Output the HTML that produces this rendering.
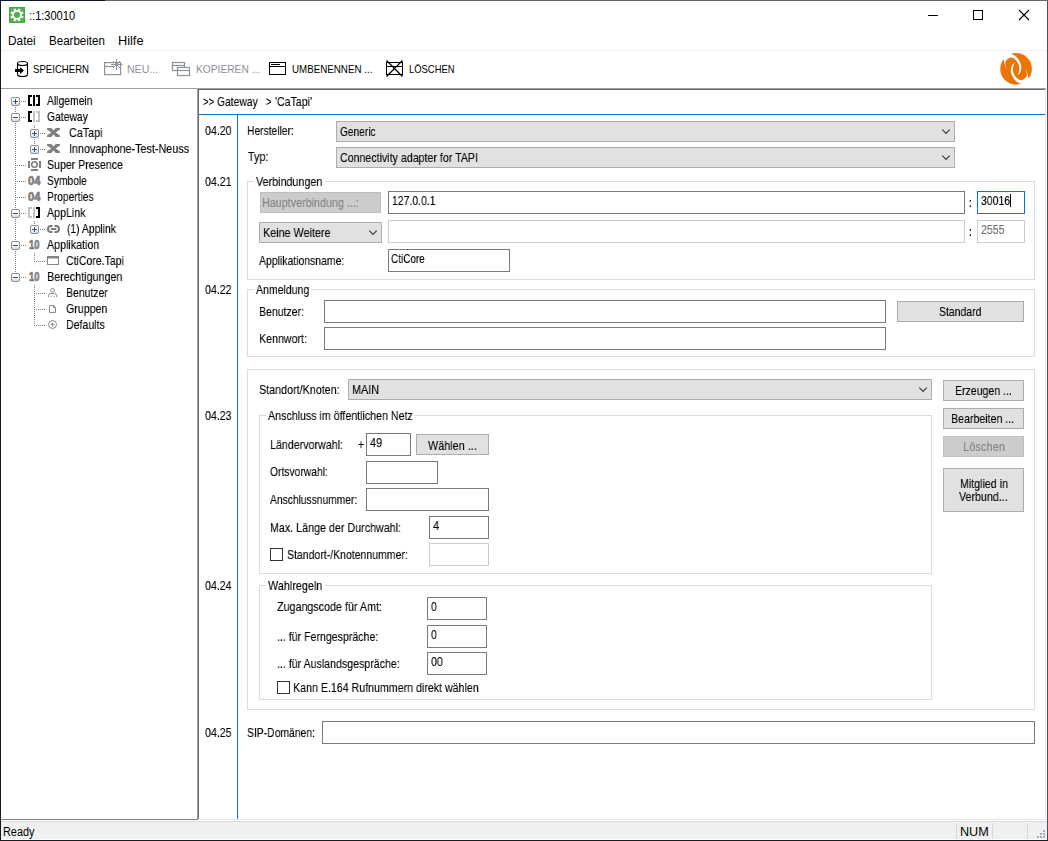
<!DOCTYPE html>
<html lang="de"><head><meta charset="utf-8"><title>::1:30010</title><style>
html,body{margin:0;padding:0;}
body{width:1048px;height:841px;overflow:hidden;background:#fff;position:relative;font-family:"Liberation Sans",sans-serif;color:#000;}
body>div,body>svg,body>span{position:absolute;box-sizing:border-box;}
.t{white-space:pre;transform-origin:0 0;display:block;}
.m{-webkit-text-stroke:0.12px currentColor;will-change:transform;}
svg{overflow:visible;}
</style></head>
<body>
<div style="left:0px;top:0px;width:1048px;height:841px;background:#fff;"></div>
<div style="left:0px;top:821px;width:1048px;height:1px;background:#d9d9d9;"></div>
<div style="left:0px;top:822px;width:1048px;height:17px;background:#f0f0f0;"></div>
<div style="left:1px;top:50px;width:1046px;height:1px;background:#f0f0f0;"></div>
<div style="left:1px;top:88px;width:1045px;height:1px;background:#a0a0a0;"></div>
<div style="left:1px;top:819px;width:197px;height:1px;background:#828282;"></div>
<div style="left:197px;top:88px;width:1px;height:731px;background:#a0a0a0;"></div>
<div style="left:198px;top:89px;width:1px;height:730px;background:#696969;"></div>
<div style="left:198px;top:89px;width:847px;height:1px;background:#696969;"></div>
<div style="left:1045px;top:89px;width:1px;height:731px;background:#e3e3e3;"></div>
<div style="left:199px;top:819px;width:847px;height:1px;background:#e3e3e3;"></div>
<div style="left:0px;top:0px;width:1px;height:841px;background:#0f1a26;"></div>
<div style="left:1047px;top:0px;width:1px;height:841px;background:#4a4f55;"></div>
<div style="left:0px;top:840px;width:1048px;height:1px;background:#1a1e24;"></div>
<div style="left:105px;top:0px;width:943px;height:1px;background:#666;"></div>
<div style="left:0px;top:0px;width:105px;height:1px;background:#0f1a26;"></div>
<svg style="left:9px;top:7px" width="16" height="16" viewBox="0 0 16 16"><rect width="16" height="16" fill="#3fab3c"/><rect x="0.7" y="0.7" width="14.6" height="14.6" fill="#4db04d"/><g fill="#fff"><circle cx="8" cy="7.9" r="4.7"/><rect x="6.7" y="1.4" width="2.6" height="13" transform="rotate(22.5 8 7.9)"/><rect x="6.7" y="1.4" width="2.6" height="13" transform="rotate(67.5 8 7.9)"/><rect x="6.7" y="1.4" width="2.6" height="13" transform="rotate(112.5 8 7.9)"/><rect x="6.7" y="1.4" width="2.6" height="13" transform="rotate(157.5 8 7.9)"/></g><circle cx="8" cy="7.9" r="3.05" fill="#4db04d"/></svg>
<div style="left:928px;top:15px;width:10px;height:1px;background:#000;"></div>
<div style="left:973px;top:10px;width:10px;height:10px;border:1px solid #000;"></div>
<svg style="left:1019px;top:10px" width="10" height="10" viewBox="0 0 10 10"><path d="M0 0L10 10M10 0L0 10" stroke="#000" stroke-width="1.1" fill="none"/></svg>
<svg style="left:14px;top:60px" width="16" height="18" viewBox="0 0 16 18"><g fill="none" stroke="#000" stroke-width="1.15"><ellipse cx="8.5" cy="3.5" rx="5" ry="2"/><path d="M3.5 3.5V14.5M13.5 3.5V14.5"/><path d="M3.5 14.5A5 2 0 0 0 13.5 14.5"/></g><path d="M1 9H6V7L10 10.5L6 14V12H1z" fill="#000"/></svg>
<svg style="left:104px;top:58px" width="19" height="17" viewBox="0 0 19 17"><g fill="none" stroke="#8e9398" stroke-width="1.2"><rect x="0.6" y="4.6" width="16" height="12"/><path d="M0.6 8.5H10"/><path d="M12.5 1V12M7 6.5H18.5M9 3L16 10M16 3L9 10" stroke-width="1"/></g></svg>
<svg style="left:172px;top:62px" width="18" height="14" viewBox="0 0 18 14"><g fill="#fff" stroke="#8e9398" stroke-width="1.2"><rect x="0.5" y="0.5" width="12" height="8"/><path d="M0.5 3.5H12.5"/><rect x="5.5" y="5.5" width="12" height="8"/><path d="M5.5 8.5H17.5"/></g></svg>
<svg style="left:269px;top:62px" width="17" height="13" viewBox="0 0 17 13"><rect x="0.5" y="0.5" width="16" height="12" fill="#fff" stroke="#000" stroke-width="1"/><path d="M0 4.5H17M2 2.5H11" stroke="#000" stroke-width="1"/></svg>
<svg style="left:385px;top:60px" width="19" height="17" viewBox="0 0 19 17"><g fill="none" stroke="#000"><rect x="1.5" y="2.5" width="16" height="12" stroke-width="1"/><path d="M1 6.5H18" stroke-width="1"/><path d="M1.5 0.5L17.5 16.5M17.5 0.5L1.5 16.5" stroke-width="1.25"/></g></svg>
<svg style="left:1000px;top:53px" width="32" height="32" viewBox="0 0 32 32"><g transform="translate(16.07 15.9)"><circle r="15.8" fill="#ec7405"/><path d="M-8.90 0.50L-10.10 -1.60L-11.60 -5.05L-12.50 -9.30L-16.00 -14.00L-8.00 -18.00L-4.40 -14.90L-0.90 -13.20L2.05 -10.20L4.20 -6.30L5.30 -2.50L5.05 0.90L3.80 4.40L1.00 6.70L2.70 3.50L3.30 0.10L2.90 -3.30L1.20 -6.80L-0.90 -9.30L-3.10 -10.80L-5.65 -11.30L-8.20 -10.20L-10.40 -7.80L-10.90 -5.20L-9.90 -2.00z" fill="#fff"/><path d="M-8.90 0.50L-10.10 -1.60L-11.60 -5.05L-12.50 -9.30L-16.00 -14.00L-8.00 -18.00L-4.40 -14.90L-0.90 -13.20L2.05 -10.20L4.20 -6.30L5.30 -2.50L5.05 0.90L3.80 4.40L1.00 6.70L2.70 3.50L3.30 0.10L2.90 -3.30L1.20 -6.80L-0.90 -9.30L-3.10 -10.80L-5.65 -11.30L-8.20 -10.20L-10.40 -7.80L-10.90 -5.20L-9.90 -2.00z" fill="#fff" transform="rotate(180)"/></g></svg>
<svg style="left:15px;top:107px" width="1" height="166" viewBox="0 0 1 166"><path d="M0.5 0V166" stroke="#808080" stroke-width="1" stroke-dasharray="1 1"/></svg>
<svg style="left:34px;top:125px" width="1" height="20" viewBox="0 0 1 20"><path d="M0.5 0V20" stroke="#808080" stroke-width="1" stroke-dasharray="1 1"/></svg>
<svg style="left:34px;top:221px" width="1" height="4" viewBox="0 0 1 4"><path d="M0.5 0V4" stroke="#808080" stroke-width="1" stroke-dasharray="1 1"/></svg>
<svg style="left:34px;top:253px" width="1" height="9" viewBox="0 0 1 9"><path d="M0.5 0V9" stroke="#808080" stroke-width="1" stroke-dasharray="1 1"/></svg>
<svg style="left:34px;top:285px" width="1" height="41" viewBox="0 0 1 41"><path d="M0.5 0V41" stroke="#808080" stroke-width="1" stroke-dasharray="1 1"/></svg>
<div style="left:11px;top:97px;width:9px;height:9px;border:1px solid #919191;border-radius:2px;background:linear-gradient(#ffffff 40%,#dadada);"></div>
<svg style="left:11px;top:97px" width="9" height="9" viewBox="0 0 9 9"><path d="M2 4.5H7" stroke="#2f4f9f" stroke-width="1"/><path d="M4.5 2V7" stroke="#2f4f9f" stroke-width="1"/></svg>
<svg style="left:21px;top:101px" width="5" height="1" viewBox="0 0 5 1"><path d="M0 0.5H5" stroke="#808080" stroke-width="1" stroke-dasharray="1 1"/></svg>
<svg style="left:28px;top:95px" width="12" height="11" viewBox="0 0 12 11"><path d="M0 0H4V2H2V9H4V11H0z" fill="#000"/><rect x="5" y="0" width="2" height="11" fill="#000"/><path d="M12 0H8V2H10V9H8V11H12z" fill="#000"/></svg>
<div style="left:11px;top:113px;width:9px;height:9px;border:1px solid #919191;border-radius:2px;background:linear-gradient(#ffffff 40%,#dadada);"></div>
<svg style="left:11px;top:113px" width="9" height="9" viewBox="0 0 9 9"><path d="M2 4.5H7" stroke="#2f4f9f" stroke-width="1"/></svg>
<svg style="left:21px;top:117px" width="5" height="1" viewBox="0 0 5 1"><path d="M0 0.5H5" stroke="#808080" stroke-width="1" stroke-dasharray="1 1"/></svg>
<svg style="left:28px;top:111px" width="12" height="11" viewBox="0 0 12 11"><path d="M0 0H4V2H2V9H4V11H0z" fill="#000"/><rect x="5" y="0" width="2" height="11" fill="#c3c3c3"/><path d="M12 0H8V2H10V9H8V11H12z" fill="#c3c3c3"/></svg>
<div style="left:30px;top:129px;width:9px;height:9px;border:1px solid #919191;border-radius:2px;background:linear-gradient(#ffffff 40%,#dadada);"></div>
<svg style="left:30px;top:129px" width="9" height="9" viewBox="0 0 9 9"><path d="M2 4.5H7" stroke="#2f4f9f" stroke-width="1"/><path d="M4.5 2V7" stroke="#2f4f9f" stroke-width="1"/></svg>
<svg style="left:40px;top:133px" width="5" height="1" viewBox="0 0 5 1"><path d="M0 0.5H5" stroke="#808080" stroke-width="1" stroke-dasharray="1 1"/></svg>
<div style="left:30px;top:145px;width:9px;height:9px;border:1px solid #919191;border-radius:2px;background:linear-gradient(#ffffff 40%,#dadada);"></div>
<svg style="left:30px;top:145px" width="9" height="9" viewBox="0 0 9 9"><path d="M2 4.5H7" stroke="#2f4f9f" stroke-width="1"/><path d="M4.5 2V7" stroke="#2f4f9f" stroke-width="1"/></svg>
<svg style="left:40px;top:149px" width="5" height="1" viewBox="0 0 5 1"><path d="M0 0.5H5" stroke="#808080" stroke-width="1" stroke-dasharray="1 1"/></svg>
<svg style="left:17px;top:165px" width="9" height="1" viewBox="0 0 9 1"><path d="M0 0.5H9" stroke="#808080" stroke-width="1" stroke-dasharray="1 1"/></svg>
<svg style="left:17px;top:181px" width="9" height="1" viewBox="0 0 9 1"><path d="M0 0.5H9" stroke="#808080" stroke-width="1" stroke-dasharray="1 1"/></svg>
<svg style="left:17px;top:197px" width="9" height="1" viewBox="0 0 9 1"><path d="M0 0.5H9" stroke="#808080" stroke-width="1" stroke-dasharray="1 1"/></svg>
<div style="left:11px;top:209px;width:9px;height:9px;border:1px solid #919191;border-radius:2px;background:linear-gradient(#ffffff 40%,#dadada);"></div>
<svg style="left:11px;top:209px" width="9" height="9" viewBox="0 0 9 9"><path d="M2 4.5H7" stroke="#2f4f9f" stroke-width="1"/></svg>
<svg style="left:21px;top:213px" width="5" height="1" viewBox="0 0 5 1"><path d="M0 0.5H5" stroke="#808080" stroke-width="1" stroke-dasharray="1 1"/></svg>
<svg style="left:28px;top:207px" width="12" height="11" viewBox="0 0 12 11"><path d="M0 0H4V2H2V9H4V11H0z" fill="#c3c3c3"/><rect x="5" y="0" width="2" height="11" fill="#c3c3c3"/><path d="M12 0H8V2H10V9H8V11H12z" fill="#000"/></svg>
<div style="left:30px;top:225px;width:9px;height:9px;border:1px solid #919191;border-radius:2px;background:linear-gradient(#ffffff 40%,#dadada);"></div>
<svg style="left:30px;top:225px" width="9" height="9" viewBox="0 0 9 9"><path d="M2 4.5H7" stroke="#2f4f9f" stroke-width="1"/><path d="M4.5 2V7" stroke="#2f4f9f" stroke-width="1"/></svg>
<svg style="left:40px;top:229px" width="5" height="1" viewBox="0 0 5 1"><path d="M0 0.5H5" stroke="#808080" stroke-width="1" stroke-dasharray="1 1"/></svg>
<div style="left:11px;top:241px;width:9px;height:9px;border:1px solid #919191;border-radius:2px;background:linear-gradient(#ffffff 40%,#dadada);"></div>
<svg style="left:11px;top:241px" width="9" height="9" viewBox="0 0 9 9"><path d="M2 4.5H7" stroke="#2f4f9f" stroke-width="1"/></svg>
<svg style="left:21px;top:245px" width="5" height="1" viewBox="0 0 5 1"><path d="M0 0.5H5" stroke="#808080" stroke-width="1" stroke-dasharray="1 1"/></svg>
<svg style="left:36px;top:261px" width="9" height="1" viewBox="0 0 9 1"><path d="M0 0.5H9" stroke="#808080" stroke-width="1" stroke-dasharray="1 1"/></svg>
<div style="left:11px;top:273px;width:9px;height:9px;border:1px solid #919191;border-radius:2px;background:linear-gradient(#ffffff 40%,#dadada);"></div>
<svg style="left:11px;top:273px" width="9" height="9" viewBox="0 0 9 9"><path d="M2 4.5H7" stroke="#2f4f9f" stroke-width="1"/></svg>
<svg style="left:21px;top:277px" width="5" height="1" viewBox="0 0 5 1"><path d="M0 0.5H5" stroke="#808080" stroke-width="1" stroke-dasharray="1 1"/></svg>
<svg style="left:36px;top:293px" width="9" height="1" viewBox="0 0 9 1"><path d="M0 0.5H9" stroke="#808080" stroke-width="1" stroke-dasharray="1 1"/></svg>
<svg style="left:36px;top:309px" width="9" height="1" viewBox="0 0 9 1"><path d="M0 0.5H9" stroke="#808080" stroke-width="1" stroke-dasharray="1 1"/></svg>
<svg style="left:36px;top:325px" width="9" height="1" viewBox="0 0 9 1"><path d="M0 0.5H9" stroke="#808080" stroke-width="1" stroke-dasharray="1 1"/></svg>
<svg style="left:47px;top:128px" width="13" height="9" viewBox="0 0 13 9"><path d="M0 0H4.2L6.5 2.6L8.8 0H13V1.6L8.6 4.5L13 7.4V9H8.8L6.5 6.4L4.2 9H0V7.4L4.4 4.5L0 1.6z" fill="#7f7f7f"/></svg>
<svg style="left:47px;top:144px" width="13" height="9" viewBox="0 0 13 9"><path d="M0 0H4.2L6.5 2.6L8.8 0H13V1.6L8.6 4.5L13 7.4V9H8.8L6.5 6.4L4.2 9H0V7.4L4.4 4.5L0 1.6z" fill="#7f7f7f"/></svg>
<svg style="left:28px;top:158px" width="13" height="13" viewBox="0 0 13 13"><g fill="#808080"><rect x="0" y="3" width="2" height="7"/><rect x="11" y="3" width="2" height="7"/><rect x="3" y="0" width="7" height="2"/><rect x="3" y="11" width="7" height="2"/></g><circle cx="6.5" cy="6.5" r="2.8" fill="none" stroke="#808080" stroke-width="1.6"/></svg>
<svg style="left:47px;top:225px" width="13" height="8" viewBox="0 0 13 8"><g fill="none" stroke="#7a7a7a" stroke-width="2"><path d="M5.5 1H4A3 3 0 0 0 4 7H5.5"/><path d="M7.5 1H9A3 3 0 0 1 9 7H7.5"/><path d="M3.8 4H9.2"/></g></svg>
<svg style="left:47px;top:256px" width="12" height="9" viewBox="0 0 12 9"><rect x="0.5" y="0.5" width="11" height="8" fill="#fff" stroke="#858585"/><rect x="0" y="0" width="12" height="2.5" fill="#858585"/></svg>
<svg style="left:48px;top:288px" width="10" height="10" viewBox="0 0 10 10"><g fill="none" stroke="#8a8a8a" stroke-width="1"><circle cx="4.5" cy="2.3" r="1.9"/><path d="M0.5 9V7.5A2 2 0 0 1 2.5 5.5H6.5A2 2 0 0 1 8.5 7.5V9M3 7.5V9M6 7.5V9"/></g></svg>
<svg style="left:49px;top:305px" width="8" height="8" viewBox="0 0 8 8"><path d="M0.5 0.5H4.5L6.5 2.5V7.5H0.5z M4.5 0.5V2.5H6.5" fill="#fff" stroke="#8a8a8a" stroke-width="1"/></svg>
<svg style="left:48px;top:320px" width="10" height="10" viewBox="0 0 10 10"><g fill="none" stroke="#8a8a8a" stroke-width="1"><circle cx="4.5" cy="4.5" r="4"/><path d="M2.5 4.5H6.5M4.5 2.5V6.5"/></g></svg>
<div style="left:199px;top:114px;width:846px;height:1px;background:#0078d7;"></div>
<div style="left:237px;top:114px;width:1px;height:705px;background:#0078d7;"></div>
<div style="left:336px;top:121px;width:619px;height:21px;background:#e1e1e1;border:1px solid #adadad;"></div>
<svg style="left:942px;top:129px" width="9" height="6" viewBox="0 0 9 6"><path d="M0.3 0.7L4 4.5L7.7 0.7" fill="none" stroke="#3a3a3a" stroke-width="1.15"/></svg>
<div style="left:336px;top:147px;width:619px;height:21px;background:#e1e1e1;border:1px solid #adadad;"></div>
<svg style="left:942px;top:155px" width="9" height="6" viewBox="0 0 9 6"><path d="M0.3 0.7L4 4.5L7.7 0.7" fill="none" stroke="#3a3a3a" stroke-width="1.15"/></svg>
<div style="left:247px;top:181px;width:788px;height:99px;border:1px solid #dcdcdc;"></div>
<div style="left:254.3px;top:181px;width:71.19999999999999px;height:1px;background:#fff;"></div>
<div style="left:260px;top:192px;width:121px;height:21px;background:#cccccc;border:1px solid #bfbfbf;"></div>
<div style="left:388px;top:191px;width:577px;height:23px;background:#fff;border:1px solid #7a7a7a;"></div>
<div style="left:977px;top:191px;width:48px;height:23px;background:#fff;border:1px solid #0078d7;"></div>
<div style="left:1010px;top:194px;width:1px;height:13px;background:#000;"></div>
<div style="left:259px;top:222px;width:123px;height:21px;background:#e1e1e1;border:1px solid #adadad;"></div>
<svg style="left:369px;top:230px" width="9" height="6" viewBox="0 0 9 6"><path d="M0.3 0.7L4 4.5L7.7 0.7" fill="none" stroke="#3a3a3a" stroke-width="1.15"/></svg>
<div style="left:388px;top:220px;width:577px;height:23px;background:#fff;border:1px solid #cccccc;"></div>
<div style="left:977px;top:220px;width:48px;height:23px;background:#fff;border:1px solid #cccccc;"></div>
<div style="left:388px;top:249px;width:122px;height:23px;background:#fff;border:1px solid #7a7a7a;"></div>
<div style="left:247px;top:289px;width:788px;height:68px;border:1px solid #dcdcdc;"></div>
<div style="left:254.3px;top:289px;width:58.099999999999966px;height:1px;background:#fff;"></div>
<div style="left:324px;top:300px;width:562px;height:23px;background:#fff;border:1px solid #7a7a7a;"></div>
<div style="left:324px;top:327px;width:562px;height:23px;background:#fff;border:1px solid #7a7a7a;"></div>
<div style="left:897px;top:301px;width:127px;height:21px;background:#e1e1e1;border:1px solid #adadad;"></div>
<div style="left:247px;top:369px;width:788px;height:341px;border:1px solid #dcdcdc;"></div>
<div style="left:348px;top:379px;width:584px;height:21px;background:#e1e1e1;border:1px solid #adadad;"></div>
<svg style="left:919px;top:387px" width="9" height="6" viewBox="0 0 9 6"><path d="M0.3 0.7L4 4.5L7.7 0.7" fill="none" stroke="#3a3a3a" stroke-width="1.15"/></svg>
<div style="left:943px;top:380px;width:81px;height:21px;background:#e1e1e1;border:1px solid #adadad;"></div>
<div style="left:943px;top:408px;width:81px;height:21px;background:#e1e1e1;border:1px solid #adadad;"></div>
<div style="left:943px;top:436px;width:81px;height:21px;background:#cccccc;border:1px solid #bfbfbf;"></div>
<div style="left:943px;top:468px;width:81px;height:44px;background:#e1e1e1;border:1px solid #adadad;"></div>
<div style="left:259px;top:415px;width:673px;height:159px;border:1px solid #dcdcdc;"></div>
<div style="left:266px;top:415px;width:149.39999999999998px;height:1px;background:#fff;"></div>
<div style="left:366px;top:433px;width:45px;height:23px;background:#fff;border:1px solid #7a7a7a;"></div>
<div style="left:416px;top:434px;width:73px;height:21px;background:#e1e1e1;border:1px solid #adadad;"></div>
<div style="left:366px;top:461px;width:72px;height:23px;background:#fff;border:1px solid #7a7a7a;"></div>
<div style="left:366px;top:488px;width:123px;height:23px;background:#fff;border:1px solid #7a7a7a;"></div>
<div style="left:429px;top:516px;width:60px;height:23px;background:#fff;border:1px solid #7a7a7a;"></div>
<div style="left:270px;top:548px;width:13px;height:13px;background:#fff;border:1px solid #333;"></div>
<div style="left:429px;top:543px;width:60px;height:23px;background:#fff;border:1px solid #cccccc;"></div>
<div style="left:259px;top:585px;width:673px;height:115px;border:1px solid #dcdcdc;"></div>
<div style="left:266.3px;top:585px;width:59.099999999999966px;height:1px;background:#fff;"></div>
<div style="left:427px;top:597px;width:60px;height:23px;background:#fff;border:1px solid #7a7a7a;"></div>
<div style="left:427px;top:625px;width:60px;height:23px;background:#fff;border:1px solid #7a7a7a;"></div>
<div style="left:427px;top:652px;width:60px;height:23px;background:#fff;border:1px solid #7a7a7a;"></div>
<div style="left:277px;top:681px;width:13px;height:13px;background:#fff;border:1px solid #333;"></div>
<div style="left:322px;top:721px;width:713px;height:23px;background:#fff;border:1px solid #7a7a7a;"></div>
<div style="left:956px;top:823px;width:1px;height:16px;background:#d7d7d7;"></div>
<div style="left:992px;top:823px;width:1px;height:16px;background:#d7d7d7;"></div>
<div style="left:1027px;top:823px;width:1px;height:16px;background:#d7d7d7;"></div>
<svg style="left:1037px;top:830px" width="8" height="8" viewBox="0 0 8 8"><rect x="6" y="0" width="2" height="2" fill="#adadad"/><rect x="3" y="3" width="2" height="2" fill="#adadad"/><rect x="6" y="3" width="2" height="2" fill="#adadad"/><rect x="0" y="6" width="2" height="2" fill="#adadad"/><rect x="3" y="6" width="2" height="2" fill="#adadad"/><rect x="6" y="6" width="2" height="2" fill="#adadad"/></svg>
<span class="t" style="left:28.92px;top:10.42px;font-size:12.5px;line-height:12.5px;transform:scale(0.8832,1.0);">::1:30010</span>
<span class="t" style="left:7.75px;top:35.42px;font-size:12.5px;line-height:12.5px;transform:scale(0.9488,1.0);">Datei</span>
<span class="t" style="left:48.68px;top:35.42px;font-size:12.5px;line-height:12.5px;transform:scale(0.9242,1.0);">Bearbeiten</span>
<span class="t" style="left:118.48px;top:35.42px;font-size:12.5px;line-height:12.5px;transform:scale(1.0185,1.0);">Hilfe</span>
<span class="t" style="left:33.10px;top:64.27px;font-size:11.5px;line-height:11.5px;transform:scale(0.8354,1.0);">SPEICHERN</span>
<span class="t" style="left:126.80px;top:64.27px;font-size:11.5px;line-height:11.5px;transform:scale(0.9177,1.0);color:#8f8f98;">NEU...</span>
<span class="t" style="left:195.50px;top:64.27px;font-size:11.5px;line-height:11.5px;transform:scale(0.8887,1.0);color:#8f8f98;">KOPIEREN ...</span>
<span class="t" style="left:292.00px;top:64.27px;font-size:11.5px;line-height:11.5px;transform:scale(0.8498,1.0);">UMBENENNEN ...</span>
<span class="t" style="left:408.70px;top:64.27px;font-size:11.5px;line-height:11.5px;transform:scale(0.8193,1.0);">LÖSCHEN</span>
<span class="t m" style="left:47.00px;top:94.00px;font-size:13px;line-height:13px;transform:scale(0.7968,1.0);">Allgemein</span>
<span class="t m" style="left:47.40px;top:110.00px;font-size:13px;line-height:13px;transform:scale(0.7973,1.0);">Gateway</span>
<span class="t m" style="left:69.10px;top:126.00px;font-size:13px;line-height:13px;transform:scale(0.8305,1.0);">CaTapi</span>
<span class="t m" style="left:68.77px;top:142.00px;font-size:13px;line-height:13px;transform:scale(0.8311,1.0);">Innovaphone-Test-Neuss</span>
<span class="t m" style="left:47.10px;top:158.00px;font-size:13px;line-height:13px;transform:scale(0.8141,1.0);">Super Presence</span>
<span class="t m" style="left:47.10px;top:174.00px;font-size:13px;line-height:13px;transform:scale(0.7885,1.0);">Symbole</span>
<span class="t m" style="left:47.01px;top:190.00px;font-size:13px;line-height:13px;transform:scale(0.7864,1.0);">Properties</span>
<span class="t m" style="left:47.30px;top:206.00px;font-size:13px;line-height:13px;transform:scale(0.8193,1.0);">AppLink</span>
<span class="t m" style="left:66.50px;top:222.00px;font-size:13px;line-height:13px;transform:scale(0.7951,1.0);">(1) Applink</span>
<span class="t m" style="left:47.30px;top:238.00px;font-size:13px;line-height:13px;transform:scale(0.8206,1.0);">Applikation</span>
<span class="t m" style="left:66.40px;top:254.00px;font-size:13px;line-height:13px;transform:scale(0.8082,1.0);">CtiCore.Tapi</span>
<span class="t m" style="left:46.97px;top:270.00px;font-size:13px;line-height:13px;transform:scale(0.8281,1.0);">Berechtigungen</span>
<span class="t m" style="left:66.00px;top:286.00px;font-size:13px;line-height:13px;transform:scale(0.8027,1.0);">Benutzer</span>
<span class="t m" style="left:66.40px;top:302.00px;font-size:13px;line-height:13px;transform:scale(0.8181,1.0);">Gruppen</span>
<span class="t m" style="left:65.99px;top:318.00px;font-size:13px;line-height:13px;transform:scale(0.8137,1.0);">Defaults</span>
<span class="t" style="left:28.00px;top:174.00px;font-size:13px;line-height:13px;transform:scale(0.8536,1.0);color:#808080;font-weight:bold;-webkit-text-stroke:0.7px #808080;">04</span>
<span class="t" style="left:28.00px;top:190.00px;font-size:13px;line-height:13px;transform:scale(0.8536,1.0);color:#808080;font-weight:bold;-webkit-text-stroke:0.7px #808080;">04</span>
<span class="t" style="left:28.50px;top:238.00px;font-size:13px;line-height:13px;transform:scale(0.7238,1.0);color:#808080;font-weight:bold;-webkit-text-stroke:0.7px #808080;">10</span>
<span class="t" style="left:28.50px;top:270.00px;font-size:13px;line-height:13px;transform:scale(0.7238,1.0);color:#808080;font-weight:bold;-webkit-text-stroke:0.7px #808080;">10</span>
<span class="t m" style="left:202.70px;top:95.00px;font-size:13px;line-height:13px;transform:scale(0.7401,1.0);">&gt;&gt;</span>
<span class="t m" style="left:217.45px;top:95.00px;font-size:13px;line-height:13px;transform:scale(0.7944,1.0);">Gateway</span>
<span class="t m" style="left:265.60px;top:95.00px;font-size:13px;line-height:13px;transform:scale(0.7143,1.0);">&gt;</span>
<span class="t m" style="left:275.20px;top:95.00px;font-size:13px;line-height:13px;transform:scale(0.8165,1.0);">&#x27;CaTapi&#x27;</span>
<span class="t m" style="left:204.80px;top:124.00px;font-size:13px;line-height:13px;transform:scale(0.8173,1.0);">04.20</span>
<span class="t m" style="left:246.91px;top:124.00px;font-size:13px;line-height:13px;transform:scale(0.7913,1.0);">Hersteller:</span>
<span class="t m" style="left:340.40px;top:125.00px;font-size:13px;line-height:13px;transform:scale(0.7823,1.0);">Generic</span>
<span class="t m" style="left:247.60px;top:150.00px;font-size:13px;line-height:13px;transform:scale(0.8308,1.0);">Typ:</span>
<span class="t m" style="left:340.40px;top:151.00px;font-size:13px;line-height:13px;transform:scale(0.8180,1.0);">Connectivity adapter for TAPI</span>
<span class="t m" style="left:204.80px;top:175.00px;font-size:13px;line-height:13px;transform:scale(0.8173,1.0);">04.21</span>
<span class="t m" style="left:256.30px;top:175.00px;font-size:13px;line-height:13px;transform:scale(0.8274,1.0);">Verbindungen</span>
<span class="t m" style="left:262.07px;top:196.00px;font-size:13px;line-height:13px;transform:scale(0.8280,1.0);color:#838383;">Hauptverbindung ...:</span>
<span class="t m" style="left:391.80px;top:194.00px;font-size:13px;line-height:13px;transform:scale(0.8021,1.0);">127.0.0.1</span>
<span class="t" style="left:969.43px;top:196.00px;font-size:13px;line-height:13px;transform:scale(0.5667,1.0);font-weight:bold;will-change:transform;">:</span>
<span class="t m" style="left:980.80px;top:194.00px;font-size:13px;line-height:13px;transform:scale(0.8018,1.0);">30016</span>
<span class="t m" style="left:262.67px;top:226.00px;font-size:13px;line-height:13px;transform:scale(0.8293,1.0);">Keine Weitere</span>
<span class="t" style="left:969.43px;top:225.00px;font-size:13px;line-height:13px;transform:scale(0.5667,1.0);font-weight:bold;will-change:transform;">:</span>
<span class="t m" style="left:980.80px;top:223.00px;font-size:13px;line-height:13px;transform:scale(0.8121,1.0);color:#6d6d6d;">2555</span>
<span class="t m" style="left:259.30px;top:254.00px;font-size:13px;line-height:13px;transform:scale(0.8029,1.0);">Applikationsname:</span>
<span class="t m" style="left:391.20px;top:252.00px;font-size:13px;line-height:13px;transform:scale(0.7665,1.0);">CtiCore</span>
<span class="t m" style="left:204.80px;top:283.00px;font-size:13px;line-height:13px;transform:scale(0.8173,1.0);">04.22</span>
<span class="t m" style="left:256.30px;top:283.00px;font-size:13px;line-height:13px;transform:scale(0.8102,1.0);">Anmeldung</span>
<span class="t m" style="left:258.99px;top:305.00px;font-size:13px;line-height:13px;transform:scale(0.8069,1.0);">Benutzer:</span>
<span class="t m" style="left:258.98px;top:332.00px;font-size:13px;line-height:13px;transform:scale(0.8187,1.0);">Kennwort:</span>
<span class="t m" style="left:939.40px;top:305.00px;font-size:13px;line-height:13px;transform:scale(0.8033,1.0);">Standard</span>
<span class="t m" style="left:259.40px;top:383.00px;font-size:13px;line-height:13px;transform:scale(0.8261,1.0);">Standort/Knoten:</span>
<span class="t m" style="left:351.66px;top:383.00px;font-size:13px;line-height:13px;transform:scale(0.8357,1.0);">MAIN</span>
<span class="t m" style="left:954.99px;top:384.00px;font-size:13px;line-height:13px;transform:scale(0.8104,1.0);">Erzeugen ...</span>
<span class="t m" style="left:951.48px;top:412.00px;font-size:13px;line-height:13px;transform:scale(0.8162,1.0);">Bearbeiten ...</span>
<span class="t m" style="left:962.55px;top:440.00px;font-size:13px;line-height:13px;transform:scale(0.8535,1.0);color:#838383;">Löschen</span>
<span class="t m" style="left:959.68px;top:477.00px;font-size:13px;line-height:13px;transform:scale(0.8203,1.0);">Mitglied in</span>
<span class="t m" style="left:959.40px;top:490.00px;font-size:13px;line-height:13px;transform:scale(0.8200,1.0);">Verbund...</span>
<span class="t m" style="left:204.80px;top:409.00px;font-size:13px;line-height:13px;transform:scale(0.8173,1.0);">04.23</span>
<span class="t m" style="left:268.00px;top:409.00px;font-size:13px;line-height:13px;transform:scale(0.8191,1.0);">Anschluss im öffentlichen Netz</span>
<span class="t m" style="left:269.98px;top:438.00px;font-size:13px;line-height:13px;transform:scale(0.8204,1.0);">Ländervorwahl:</span>
<span class="t m" style="left:357.80px;top:438.00px;font-size:13px;line-height:13px;transform:scale(0.8143,1.0);">+</span>
<span class="t m" style="left:369.70px;top:436.00px;font-size:13px;line-height:13px;transform:scale(0.8363,1.0);">49</span>
<span class="t m" style="left:428.00px;top:439.00px;font-size:13px;line-height:13px;transform:scale(0.8340,1.0);">Wählen ...</span>
<span class="t m" style="left:270.40px;top:465.00px;font-size:13px;line-height:13px;transform:scale(0.7934,1.0);">Ortsvorwahl:</span>
<span class="t m" style="left:270.40px;top:493.00px;font-size:13px;line-height:13px;transform:scale(0.7896,1.0);">Anschlussnummer:</span>
<span class="t m" style="left:269.58px;top:521.00px;font-size:13px;line-height:13px;transform:scale(0.8242,1.0);">Max. Länge der Durchwahl:</span>
<span class="t m" style="left:432.60px;top:519.00px;font-size:13px;line-height:13px;transform:scale(0.8714,1.0);">4</span>
<span class="t m" style="left:286.60px;top:548.00px;font-size:13px;line-height:13px;transform:scale(0.8076,1.0);">Standort-/Knotennummer:</span>
<span class="t m" style="left:204.80px;top:579.00px;font-size:13px;line-height:13px;transform:scale(0.8173,1.0);">04.24</span>
<span class="t m" style="left:268.30px;top:579.00px;font-size:13px;line-height:13px;transform:scale(0.8318,1.0);">Wahlregeln</span>
<span class="t m" style="left:277.00px;top:600.00px;font-size:13px;line-height:13px;transform:scale(0.8249,1.0);">Zugangscode für Amt:</span>
<span class="t m" style="left:431.10px;top:600.00px;font-size:13px;line-height:13px;transform:scale(0.7857,1.0);">0</span>
<span class="t m" style="left:276.99px;top:630.00px;font-size:13px;line-height:13px;transform:scale(0.8144,1.0);">... für Ferngespräche:</span>
<span class="t m" style="left:431.10px;top:628.00px;font-size:13px;line-height:13px;transform:scale(0.7857,1.0);">0</span>
<span class="t m" style="left:276.98px;top:657.00px;font-size:13px;line-height:13px;transform:scale(0.8165,1.0);">... für Auslandsgespräche:</span>
<span class="t m" style="left:431.10px;top:655.00px;font-size:13px;line-height:13px;transform:scale(0.8152,1.0);">00</span>
<span class="t m" style="left:292.88px;top:681.00px;font-size:13px;line-height:13px;transform:scale(0.8184,1.0);">Kann E.164 Rufnummern direkt wählen</span>
<span class="t m" style="left:204.80px;top:726.00px;font-size:13px;line-height:13px;transform:scale(0.8173,1.0);">04.25</span>
<span class="t m" style="left:247.40px;top:726.00px;font-size:13px;line-height:13px;transform:scale(0.7962,1.0);">SIP-Domänen:</span>
<span class="t" style="left:3.13px;top:826.42px;font-size:12.5px;line-height:12.5px;transform:scale(0.8723,1.0);">Ready</span>
<span class="t" style="left:960.39px;top:826.42px;font-size:12.5px;line-height:12.5px;transform:scale(1.0091,1.0);">NUM</span>
</body></html>
